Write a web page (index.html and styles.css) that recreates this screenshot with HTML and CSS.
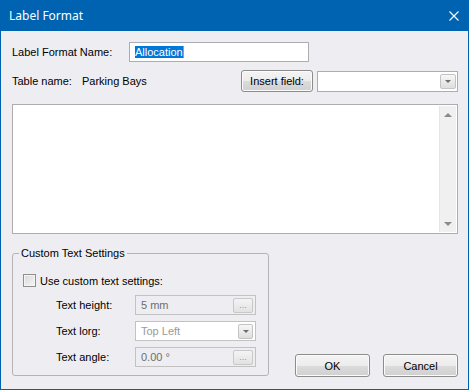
FILE: index.html
```html
<!DOCTYPE html>
<html lang="en">
<head>
  <meta charset="UTF-8">
  <title>Label Format</title>
  <link rel="stylesheet" href="styles.css">
</head>
<body>
  <div class="window">
    <div class="titlebar">
      <span class="title">Label Format</span>
      <svg class="close" width="10" height="10" viewBox="0 0 10 10">
        <path d="M0.5 0.5 L9.5 9.5 M9.5 0.5 L0.5 9.5" stroke="#fff" stroke-width="1.1" fill="none"/>
      </svg>
    </div>

    <div class="content">
      <div class="row row-name">
        <label class="lbl-name">Label Format Name:</label>
        <div class="textbox name-box"><span class="sel">Allocation</span></div>
      </div>

      <div class="row row-table">
        <span class="lbl-table">Table name:</span>
        <span class="table-value">Parking Bays</span>
        <button class="btn insert-btn">Insert field:</button>
        <div class="combo field-combo">
          <span class="combo-text"></span>
          <span class="drop"><i class="arrow-down"></i></span>
        </div>
      </div>

      <div class="editor">
        <div class="editor-text"></div>
        <div class="scrollbar">
          <i class="arrow-up big"></i>
          <i class="arrow-down big"></i>
        </div>
      </div>

      <div class="bottom">
        <fieldset class="group">
          <legend>Custom Text Settings</legend>
          <div class="check-row">
            <span class="checkbox"></span>
            <span>Use custom text settings:</span>
          </div>
          <div class="field">
            <span class="field-label">Text height:</span>
            <div class="textbox disabled">
              <span class="val">5 mm</span>
              <span class="dots">...</span>
            </div>
          </div>
          <div class="field">
            <span class="field-label">Text lorg:</span>
            <div class="combo disabled-combo">
              <span class="val light">Top Left</span>
              <span class="drop"><i class="arrow-down"></i></span>
            </div>
          </div>
          <div class="field">
            <span class="field-label">Text angle:</span>
            <div class="textbox disabled">
              <span class="val">0.00 °</span>
              <span class="dots">...</span>
            </div>
          </div>
        </fieldset>

        <div class="actions">
          <button class="btn action">OK</button>
          <button class="btn action">Cancel</button>
        </div>
      </div>
    </div>
  </div>
</body>
</html>
```

FILE: styles.css
```css
* {
  box-sizing: border-box;
}
html, body {
  margin: 0;
  padding: 0;
}
body {
  width: 469px;
  height: 390px;
  overflow: hidden;
  font-family: "Liberation Sans", Arial, sans-serif;
  font-size: 11px;
  color: #000;
}
.window {
  width: 469px;
  height: 390px;
  border: 1px solid #0063b1;
  border-top: none;
  background: #eeeef2;
  display: flex;
  flex-direction: column;
}
.titlebar {
  height: 31px;
  background: #0063b1;
  display: flex;
  align-items: center;
  justify-content: space-between;
  padding: 0 10px 0 9px;
  margin: 0 -1px;
}
.title {
  color: #fff;
  font-family: "Segoe UI", "Noto Sans", sans-serif;
  font-size: 12px;
}
.close {
  display: block;
  margin-right: 0;
}
.content {
  flex: 1;
  padding: 11px 10px 12px 11px;
  display: flex;
  flex-direction: column;
}
.row {
  display: flex;
  align-items: center;
}
.row-name {
  height: 20px;
}
.lbl-name {
  width: 117px;
}
.textbox {
  height: 20px;
  background: #fff;
  border: 1px solid #abadb3;
  display: flex;
  align-items: center;
  padding: 0 5px;
}
.name-box {
  width: 180px;
}
.sel {
  background: #0078d7;
  color: #fff;
  line-height: 12px;
  border-right: 1px solid #e58a3c;
}
.row-table {
  margin-top: 8px;
  height: 22px;
}
.lbl-table {
  width: 70px;
}
.table-value {
  flex: 1;
}
.btn {
  font-family: "Liberation Sans", Arial, sans-serif;
  font-size: 11px;
  color: #000;
  border: 1px solid #8c8c8c;
  border-radius: 3px;
  background: linear-gradient(#f4f4f4 0%, #ececec 50%, #dcdcdc 50%, #d0d0d0 100%);
  box-shadow: inset 0 0 0 1px #fbfbfb;
  padding: 0;
}
.insert-btn {
  width: 72px;
  height: 22px;
}
.combo {
  display: flex;
  align-items: center;
  justify-content: space-between;
  background: #fff;
  border: 1px solid #abadb3;
  padding: 0 1px 0 5px;
}
.field-combo {
  width: 141px;
  height: 21px;
  margin-left: 4px;
  margin-top: 1px;
}
.drop {
  width: 16px;
  height: 15px;
  border: 1px solid #c3c3c3;
  border-radius: 2px;
  background: linear-gradient(#f7f7f7, #dedede);
  display: flex;
  align-items: center;
  justify-content: center;
}
.arrow-down {
  width: 0;
  height: 0;
  border-left: 3px solid transparent;
  border-right: 3px solid transparent;
  border-top: 3px solid #6d6d6d;
}
.arrow-up {
  width: 0;
  height: 0;
  border-left: 4px solid transparent;
  border-right: 4px solid transparent;
  border-bottom: 4px solid #8a8a8a;
}
.arrow-down.big {
  border-left-width: 4px;
  border-right-width: 4px;
  border-top: 4px solid #8a8a8a;
}
.editor {
  margin-top: 12px;
  height: 130px;
  width: 446px;
  background: #fff;
  border: 1px solid #abadb3;
  display: flex;
  padding: 1px;
}
.editor-text {
  flex: 1;
}
.scrollbar {
  width: 17px;
  background: #f0f0f0;
  border-left: 1px solid #e6e6e6;
  display: flex;
  flex-direction: column;
  align-items: center;
  justify-content: space-between;
  padding: 7px 0 6px;
}
.bottom {
  margin-top: 13px;
  display: flex;
  justify-content: space-between;
  align-items: flex-end;
}
.group {
  margin: 0;
  width: 257px;
  height: 129px;
  border: 1px solid #b4b4b4;
  border-radius: 3px;
  padding: 0 0 0 10px;
}
.group legend {
  padding: 0 2px;
  margin-left: -4px;
  line-height: 13px;
}
.check-row {
  display: flex;
  align-items: center;
  margin-top: 13px;
  height: 15px;
}
.checkbox {
  width: 13px;
  height: 13px;
  border: 1px solid #8e8f8f;
  background: linear-gradient(135deg, #d8d8d8, #f6f6f6);
  box-shadow: inset 0 0 0 1px #f4f4f4;
  margin-right: 4px;
}
.field {
  display: flex;
  align-items: center;
  height: 20px;
  margin-top: 6px;
  padding-left: 33px;
}
.check-row + .field {
  margin-top: 7px;
}
.field-label {
  width: 79px;
}
.field .textbox,
.field .combo {
  width: 121px;
  height: 20px;
  justify-content: space-between;
  padding: 0 2px 0 5px;
}
.textbox.disabled {
  background: #eeeef2;
  border-color: #c2c2c2;
}
.disabled-combo {
  border-color: #c2c2c2;
}
.val {
  color: #6d6d6d;
}
.val.light {
  color: #9a9a9a;
}
.dots {
  width: 20px;
  height: 15px;
  border: 1px solid #c8c8c8;
  border-radius: 2px;
  background: linear-gradient(#f4f4f4, #e2e2e2);
  color: #9a9a9a;
  font-size: 9px;
  line-height: 13px;
  text-align: center;
}
.disabled-combo .drop {
  width: 15px;
}
.actions {
  display: flex;
  gap: 13px;
  margin-bottom: -1px;
}
.action {
  width: 75px;
  height: 23px;
}
```
